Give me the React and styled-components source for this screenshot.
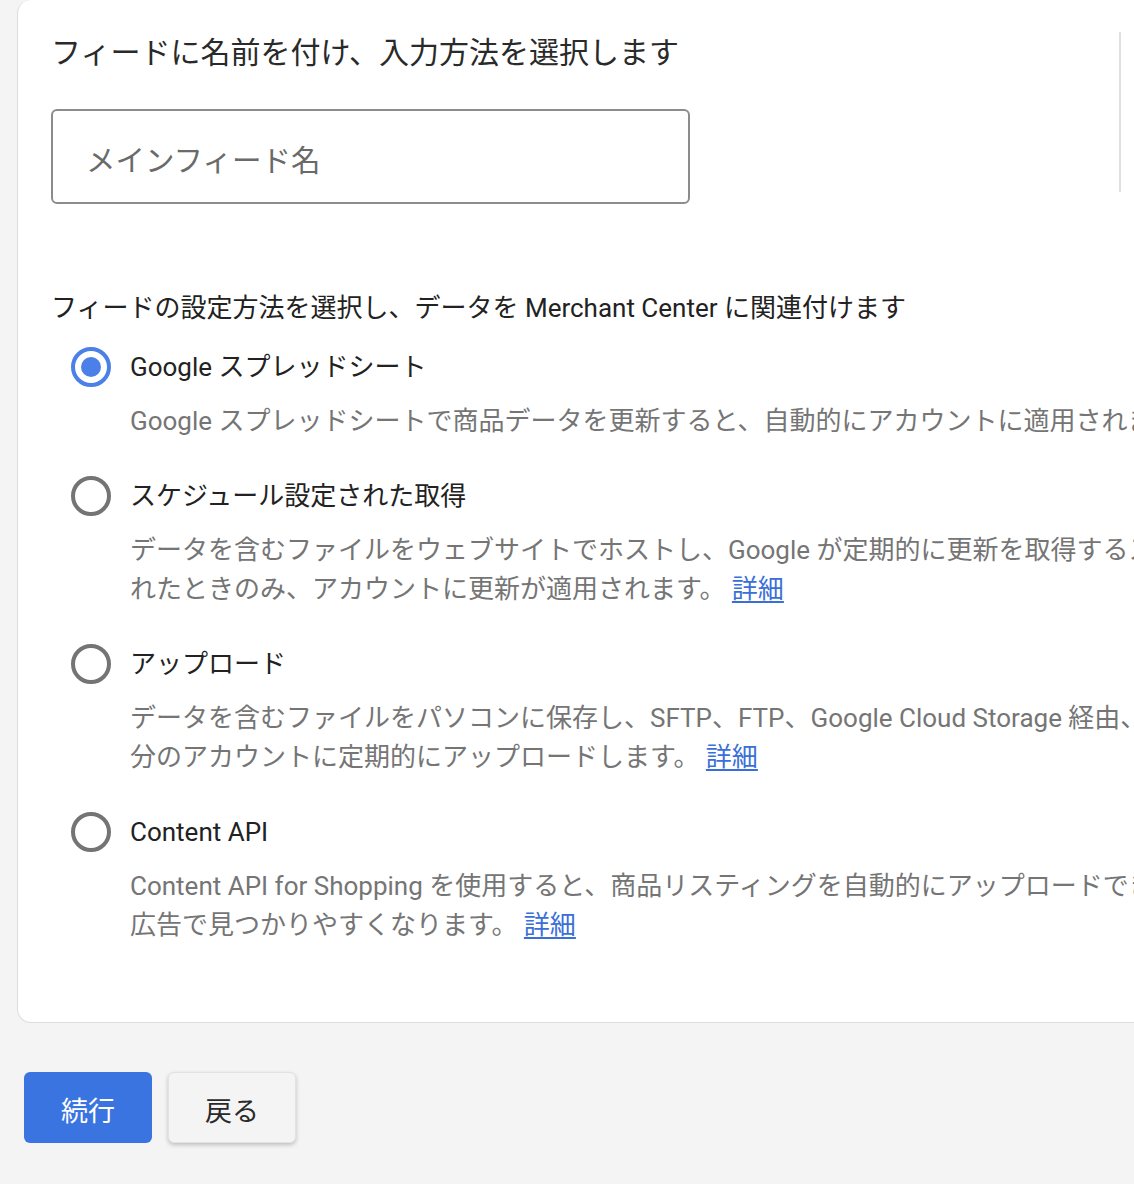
import React from "react";
import styled, { createGlobalStyle } from "styled-components";

const GlobalStyle = createGlobalStyle`
  html, body {
    margin: 0;
    padding: 0;
    background: #f4f4f4;
    overflow: hidden;
  }
  body {
    font-family: Roboto, "Noto Sans CJK JP", sans-serif;
    color: #222;
  }
`;

const options = [
  {
    id: "sheets",
    title: "Google スプレッドシート",
    lines: ["Google スプレッドシートで商品データを更新すると、自動的にアカウントに適用されます。"],
    link: false,
  },
  {
    id: "fetch",
    title: "スケジュール設定された取得",
    lines: [
      "データを含むファイルをウェブサイトでホストし、Google が定期的に更新を取得するスケジュールを設定します。更新は取得が行わ",
      "れたときのみ、アカウントに更新が適用されます。",
    ],
    link: true,
  },
  {
    id: "upload",
    title: "アップロード",
    lines: [
      "データを含むファイルをパソコンに保存し、SFTP、FTP、Google Cloud Storage 経由、または手動で自",
      "分のアカウントに定期的にアップロードします。",
    ],
    link: true,
  },
  {
    id: "api",
    title: "Content API",
    lines: [
      "Content API for Shopping を使用すると、商品リスティングを自動的にアップロードできるため、商品が Google の",
      "広告で見つかりやすくなります。",
    ],
    link: true,
  },
];

const App = () => {
  const selected = "sheets";
  return (
    <>
      <GlobalStyle />
      <Page>
        <Card>
          <TopRow>
            <Main>
              <Heading>フィードに名前を付け、入力方法を選択します</Heading>
              <NameInput placeholder="メインフィード名" />
            </Main>
            <Aside />
          </TopRow>
          <SectionLabel>
            フィードの設定方法を選択し、データを Merchant Center に関連付けます
          </SectionLabel>
          <OptionList>
            {options.map((o) => (
              <Option key={o.id}>
                <Radio checked={o.id === selected} />
                <OptionBody>
                  <OptionTitle>{o.title}</OptionTitle>
                  <Description>
                    {o.lines.map((line, i) => (
                      <Line key={i}>
                        {line}
                        {o.link && i === o.lines.length - 1 && (
                          <>
                            {" "}
                            <DetailLink href="#">詳細</DetailLink>
                          </>
                        )}
                      </Line>
                    ))}
                  </Description>
                </OptionBody>
              </Option>
            ))}
          </OptionList>
        </Card>
        <Actions>
          <PrimaryButton>続行</PrimaryButton>
          <SecondaryButton>戻る</SecondaryButton>
        </Actions>
      </Page>
    </>
  );
};

export default App;

const Page = styled.div`
  width: 1134px;
  height: 1184px;
  padding-left: 17px;
  box-sizing: border-box;
  overflow: hidden;
`;

const Card = styled.div`
  width: 1400px;
  box-sizing: border-box;
  background: #fff;
  border: 1px solid #dcdcdc;
  border-top: none;
  border-radius: 14px 0 14px 14px;
  padding: 33px 0 77px 33px;
`;

const TopRow = styled.div`
  display: flex;
  align-items: flex-start;
`;

const Main = styled.div`
  width: 1068px;
  display: flex;
  flex-direction: column;
`;

const Aside = styled.div`
  margin-top: -1px;
  height: 160px;
  border-left: 2px solid #e0e0e0;
`;

const Heading = styled.div`
  font-size: 30px;
  line-height: 40px;
  color: #2a2a2a;
`;

const NameInput = styled.input`
  margin-top: 36px;
  width: 639px;
  height: 95px;
  box-sizing: border-box;
  border: 2px solid #8c8c8c;
  border-radius: 6px;
  padding: 8px 0 0 33px;
  font-family: Roboto, "Noto Sans CJK JP", sans-serif;
  font-size: 29.5px;
  color: #222;
  outline: none;
  &::placeholder {
    color: #6a6a6a;
  }
`;

const SectionLabel = styled.div`
  margin-top: 86px;
  font-size: 26px;
  line-height: 36px;
  color: #222;
`;

const OptionList = styled.div`
  margin-top: 23px;
  padding-left: 20px;
  display: flex;
  flex-direction: column;
  gap: 37px;
`;

const Option = styled.div`
  display: flex;
  align-items: flex-start;
  gap: 19px;
`;

const Radio = styled.span`
  flex: none;
  width: 40px;
  height: 40px;
  margin-top: -2px;
  box-sizing: border-box;
  border-radius: 50%;
  border: 4px solid ${(p) => (p.checked ? "#4a80e8" : "#747474")};
  display: flex;
  align-items: center;
  justify-content: center;
  &::after {
    content: "";
    width: 20px;
    height: 20px;
    border-radius: 50%;
    background: #4a80e8;
    display: ${(p) => (p.checked ? "block" : "none")};
  }
`;

const OptionBody = styled.div`
  display: flex;
  flex-direction: column;
  gap: 17px;
`;

const OptionTitle = styled.div`
  font-size: 26px;
  line-height: 36px;
  color: #222;
`;

const Description = styled.div`
  font-size: 26px;
  line-height: 39px;
  color: #757575;
`;

const Line = styled.div`
  white-space: nowrap;
`;

const DetailLink = styled.a`
  color: #3a6fd9;
  text-decoration: underline;
  text-underline-offset: 3px;
`;

const Actions = styled.div`
  margin-top: 49px;
  padding-left: 7px;
  display: flex;
  gap: 16px;
`;

const BaseButton = styled.button`
  width: 128px;
  height: 71px;
  padding-top: 4px;
  border-radius: 6px;
  font-family: Roboto, "Noto Sans CJK JP", sans-serif;
  font-size: 27px;
  cursor: pointer;
`;

const PrimaryButton = styled(BaseButton)`
  border: none;
  background: #3a74e0;
  color: #fff;
`;

const SecondaryButton = styled(BaseButton)`
  border: 1px solid #e2e2e2;
  background: #f4f4f4;
  color: #2a2a2a;
  box-shadow: 0 2px 4px rgba(0, 0, 0, 0.22);
`;
